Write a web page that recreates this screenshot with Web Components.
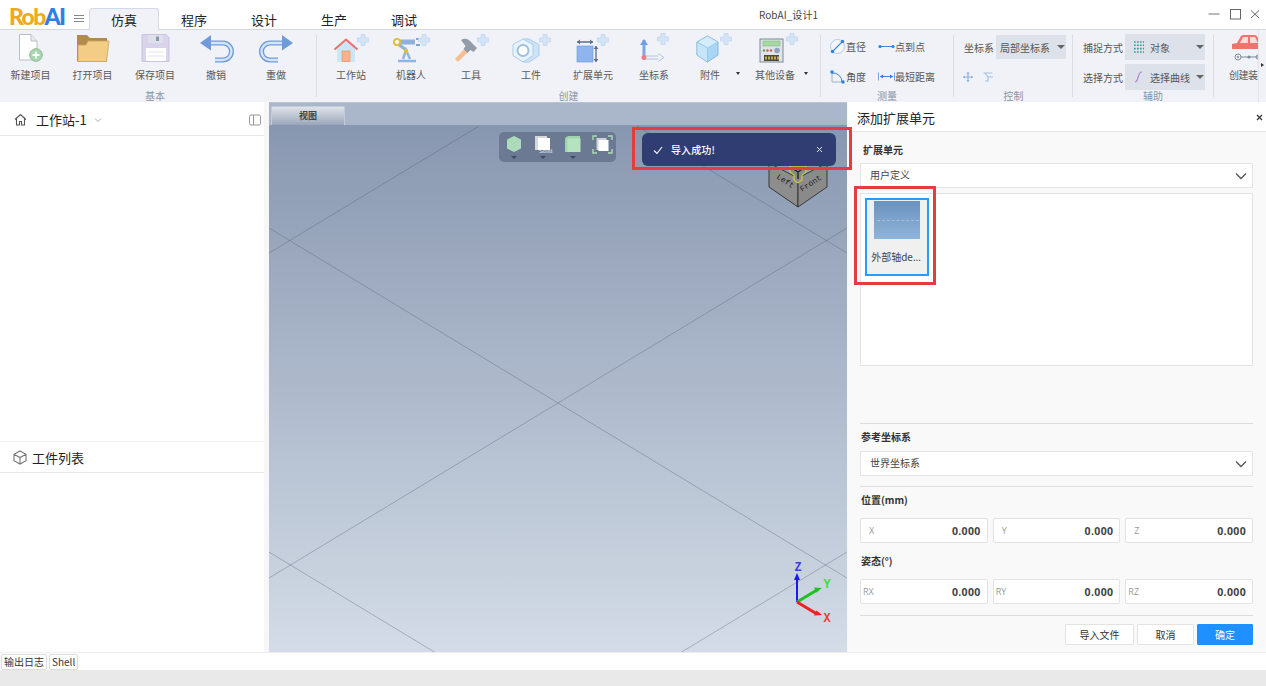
<!DOCTYPE html>
<html lang="zh"><head><meta charset="utf-8"><title>RobAI</title>
<style>
html,body{margin:0;height:686px;overflow:hidden;background:#fff;font-family:"Noto Sans CJK SC","Noto Sans",sans-serif;color:#333}
</style></head><body>
<rb-app></rb-app>
<script>
function def(name,css,html,attrs){
  customElements.define(name,class extends HTMLElement{
    connectedCallback(){
      if(this.shadowRoot)return;
      const s=this.attachShadow({mode:'open'});
      const a={};for(const n of this.getAttributeNames())a[n]=this.getAttribute(n);
      s.innerHTML='<style>'+css+'</style>'+(typeof html==='function'?html(a):html);
    }
  });
}
const plus=(x,y)=>`<path d="M${x-2} ${y-5.5}h4v3.5h3.5v4H${x+2}v3.5h-4V${y+2}H${x-5.5}v-4H${x-2}z" fill="#d3e4f6" stroke="#b8d2ee" stroke-width=".6"/>`;
const svg=(b,w=44,h=30)=>`<svg slot="icon" width="${w}" height="${h}" viewBox="0 0 ${w} ${h}" style="overflow:visible;display:block">${b}</svg>`;
const I={
 nw:svg(`<path d="M10.5 .5H22l6 6.500V26H10.500z" fill="#fff" stroke="#b9bec8"/><path d="M22 .5V7h6" fill="#e8eaef" stroke="#b9bec8"/><circle cx="27" cy="21" r="6.300" fill="#a7d8ae" stroke="#8fb79a"/><path d="M27 17.500v7M23.500 21h7" stroke="#fff" stroke-width="1.800"/>`),
 op:svg(`<path d="M6 27.500V1h10l3 3h17v23.500z" fill="#b08a4e"/><path d="M7 27.500h28.500L38 7H17l-2 4H7z" fill="#f3cd85" stroke="#c9a262" stroke-width=".8"/>`),
 sv:svg(`<path d="M9 .5h24l3 3v24H9z" fill="#d9d3ec" stroke="#c9c2e2"/><rect x="15" y="1" width="15" height="8" fill="#dde1ea"/><rect x="23" y="2.500" width="3" height="4.500" fill="#8d95a8"/><rect x="13" y="14" width="20" height="13" fill="#fff"/><path d="M15 18h16M15 22h16" stroke="#e3e3ec"/>`),
 ud:svg(`<path d="M15 9H29a8.500 8.500 0 0 1 0 17H21" fill="none" stroke="#6f9bdc" stroke-width="5"/><path d="M15 9H29a8.500 8.500 0 0 1 0 17H21" fill="none" stroke="#d6e4f8" stroke-width="2.400"/><path d="M6 9l11-8v15.500z" fill="#6f9bdc"/>`),
 rd:svg(`<g transform="translate(45 0) scale(-1 1)"><path d="M15 9H29a8.500 8.500 0 0 1 0 17H21" fill="none" stroke="#6f9bdc" stroke-width="5"/><path d="M15 9H29a8.500 8.500 0 0 1 0 17H21" fill="none" stroke="#d6e4f8" stroke-width="2.400"/><path d="M6 9l11-8v15.500z" fill="#6f9bdc"/></g>`),
 ws:svg(`<path d="M8 14L17 7l9 7v14H8z" fill="#c9e8f7"/><rect x="13" y="17" width="8" height="10.500" fill="#f7b28c" stroke="#ee8f66" stroke-width=".7"/><path d="M5.500 15.500L17 5.500l11.500 10" fill="none" stroke="#e8706a" stroke-width="2"/>${plus(34,6)}`),
 rb:svg(`<path d="M9 27h18" stroke="#8db6e3" stroke-width="2.500"/><path d="M14 25l3-9 4 9" fill="none" stroke="#8db6e3" stroke-width="2.500"/><path d="M8 9L17 16" stroke="#8fb2d8" stroke-width="3"/><path d="M9 8h17" stroke="#8fb2d8" stroke-width="5"/><circle cx="8" cy="8" r="3" fill="#fff" stroke="#e4bf3a" stroke-width="2"/><circle cx="17" cy="17" r="2.200" fill="#e4bf3a"/><path d="M27 5h4M27 11h4" stroke="#7ca6d4" stroke-width="2"/>${plus(35,6)}`),
 hm:svg(`<path d="M6 25L19 11l3.500 3.500L9 28z" fill="#f8bd90"/><path d="M12 6q5-3 9 1l7 7-3.500 4-3-2-3 3-4-4 2-3z" fill="#939ca8"/>${plus(34,6)}`),
 nt:svg(`<path d="M14 5h6l10 5.500v11L20 28h-6z" fill="#cfe3f6" stroke="#a9cdec"/><path d="M14 5l10 5.500v11L14 28 4 21.500v-11z" fill="#e9f3fb" stroke="#a9cdec"/><circle cx="14" cy="16.500" r="5.500" fill="#fff" stroke="#9fbfdf" stroke-width="2"/>${plus(36,6)}`),
 ex:svg(`<rect x="6" y="12" width="16" height="16" fill="#8fb4ee" stroke="#6d96d8" stroke-width=".6"/><path d="M6 8h16M25 12v16" stroke="#5a6f8c" stroke-width="1.300"/><path d="M6 8l3-2.500v5zM22 8l-3-2.500v5zM25 12l-2.500 3h5zM25 28l-2.500-3h5z" fill="#5a6f8c"/>${plus(32,6)}`),
 cs:svg(`<path d="M12 6v17" stroke="#7ba6e8" stroke-width="3"/><path d="M12 5l-4 6h8z" fill="#6f9ee6"/><circle cx="12" cy="23.500" r="2.500" fill="#f07a80"/><path d="M14 22h13M14 25h13" stroke="#a9bfd8" stroke-width=".9"/><path d="M26 19.500l6 4-6 4" fill="#eef2f8" stroke="#a9bfd8" stroke-width=".9"/>${plus(31,5)}`),
 cb:svg(`<path d="M19.500 2L30 8v13l-10.500 7L9 21V8z" fill="#a9d6f5" stroke="#86b8dc"/><path d="M9 8l10.500 6L30 8 19.500 2z" fill="#d5ecfb" stroke="#86b8dc" stroke-width=".6"/><path d="M19.500 14v14L9 21V8z" fill="#c6e5f9" stroke="#86b8dc" stroke-width=".6"/>${plus(38,5)}`),
 ot:svg(`<rect x="7" y="5" width="23" height="23" fill="#dfe4ea" stroke="#7d8894"/><rect x="10" y="7" width="17" height="5" fill="#a6d8a2" stroke="#7fae80" stroke-width=".5"/><circle cx="11" cy="16.500" r="1.200" fill="#5d9c5d"/><circle cx="14.500" cy="16.500" r="1.200" fill="#d8544e"/><circle cx="18" cy="16.500" r="1.200" fill="#d8544e"/><circle cx="24" cy="16.500" r="2.800" fill="#8ea4bd"/><rect x="11" y="21" width="15" height="6" fill="#4a4a3f"/><path d="M13 22.500v3M16 22.500v3M19 22.500v3M22 22.500v3M25 22.500v3" stroke="#e5c252" stroke-width="1.600"/>${plus(39,5)}`),
 car:svg(`<path d="M3 10l5-1 4-7q1-1 3-1h10q2 0 3 1l3 7v6H3z" fill="#f0746e"/><path d="M14 3h5v6h-8zM21 3h5l3 6h-8z" fill="#fbdcda"/><circle cx="9" cy="23" r="3" fill="none" stroke="#7d8a9a"/><circle cx="9" cy="23" r="1.100" fill="#7d8a9a"/><path d="M12 23h18" stroke="#7d8a9a"/><circle cx="20" cy="23" r="1.600" fill="#7d8a9a"/><circle cx="29" cy="23" r="2" fill="none" stroke="#7d8a9a"/>`,36,30)
};
const ms={
 d:`<svg width="17" height="17" viewBox="0 0 17 17"><circle cx="8.500" cy="8.500" r="7" fill="#f3f6fb" stroke="#b7c9e6"/><path d="M3.500 13.500l10-10" stroke="#3d87e6" stroke-width="1.100"/><circle cx="3.500" cy="13.500" r="1.700" fill="#2c7fe8"/><circle cx="13.500" cy="3.500" r="1.700" fill="#2c7fe8"/></svg>`,
 a:`<svg width="17" height="17" viewBox="0 0 17 17"><path d="M3 3v11h11" fill="none" stroke="#9db1cc"/><path d="M3 5a9 9 0 0 1 10 9" fill="none" stroke="#4a7ecb"/><circle cx="3" cy="4" r="1.700" fill="#2c7fe8"/><circle cx="14" cy="14" r="1.700" fill="#2c7fe8"/></svg>`,
 p:`<svg width="17" height="9" viewBox="0 0 17 9"><path d="M2 4.500h13" stroke="#3d87e6"/><circle cx="2" cy="4.500" r="1.600" fill="#2c7fe8"/><circle cx="15" cy="4.500" r="1.600" fill="#2c7fe8"/></svg>`,
 s:`<svg width="17" height="9" viewBox="0 0 17 9"><path d="M.5 .5v8M16.500 .5v8" stroke="#7fa2d4"/><path d="M2 4.500h13" stroke="#3d87e6"/><path d="M2 4.500l3-2v4zM15 4.500l-3-2v4z" fill="#2c7fe8"/></svg>`
};

def('rb-item',`:host{display:flex;flex-direction:column;align-items:center;position:relative;flex:none;padding-top:4px;box-sizing:border-box}
.i{height:30px;display:flex;justify-content:center}
.l{margin-top:4px;font-size:10px;line-height:14px;color:#5a5a5a;white-space:nowrap}
.c{position:absolute;top:42px;width:0;height:0;border:2.500px solid transparent;border-top:3px solid #333;border-bottom:0}`,
a=>`<div class="i"><slot name="icon"></slot></div><div class="l">${a.label}</div>${a.caret?`<span class="c" style="right:${a.caret}px"></span>`:''}`);

def('rb-group',`:host{display:flex;flex-direction:column;flex:none;height:72px;box-sizing:border-box;padding-right:1px;background:linear-gradient(#d9dde6,#d9dde6) right 5px/1px 62px no-repeat}
:host([last]){background:none;padding:0;overflow:hidden}
.c{flex:1;display:flex;min-height:0}
.t{height:12px;line-height:12px;font-size:10px;color:#8b95a8;text-align:center;white-space:nowrap}`,
a=>`<div class="c"><slot></slot></div><div class="t" style="${a.pl?'padding-left:'+a.pl+'px;':''}${a.pr?'padding-right:'+a.pr+'px':''}">${a.label||''}</div>`);

def('rb-drop',`:host{display:flex;align-items:center;box-sizing:border-box;background:#dde2ea;font-size:10px;color:#555;position:relative;white-space:nowrap}
.a{position:absolute;right:1px;top:50%;margin-top:-2px;border:4px solid transparent;border-top:4px solid #666;border-bottom:0}`,
`<slot></slot><span class="a"></span>`);

def('rb-ribbon',`:host{display:flex;height:72px;background:#f0f2f7;flex:none;overflow:hidden;position:relative;font-size:10px;color:#555}
.rw{display:flex;align-items:center;white-space:nowrap}
.scroll{width:8px;flex:none;box-sizing:border-box;border-left:1px solid #e1e5ee;display:flex;align-items:center;justify-content:center;height:72px}
.scroll i{border:2.500px solid transparent;border-left:3px solid #333;border-right:0;transform:translateY(-1px)}
.m{display:grid;grid-template-columns:49px 1fr;padding:1px 0 0 8px;align-content:start;width:100%;box-sizing:border-box}
.m .rw{height:30px}
.m svg{display:block;flex:none}`,
`<rb-group label="基本" style="width:317px" pr="6">
 <rb-item label="新建项目" style="width:61px">${I.nw}</rb-item>
 <rb-item label="打开项目" style="width:63px">${I.op}</rb-item>
 <rb-item label="保存项目" style="width:62px">${I.sv}</rb-item>
 <rb-item label="撤销" style="width:60px">${I.ud}</rb-item>
 <rb-item label="重做" style="width:60px">${I.rd}</rb-item>
</rb-group>
<rb-group label="创建" style="width:504px">
 <rb-item label="工作站" style="width:60px;margin-left:4px">${I.ws}</rb-item>
 <rb-item label="机器人" style="width:60px">${I.rb}</rb-item>
 <rb-item label="工具" style="width:60px">${I.hm}</rb-item>
 <rb-item label="工件" style="width:60px">${I.nt}</rb-item>
 <rb-item label="扩展单元" style="width:64px">${I.ex}</rb-item>
 <rb-item label="坐标系" style="width:58px">${I.cs}</rb-item>
 <rb-item label="附件" caret="-3" style="width:54px">${I.cb}</rb-item>
 <rb-item label="其他设备" caret="-3" style="width:60px;margin-left:8px">${I.ot}</rb-item>
</rb-group>
<rb-group label="测量" style="width:133px">
 <div class="m">
  <div class="rw">${ms.d}<span>直径</span></div><div class="rw">${ms.p}<span>点到点</span></div>
  <div class="rw">${ms.a}<span>角度</span></div><div class="rw">${ms.s}<span>最短距离</span></div>
 </div>
</rb-group>
<rb-group label="控制" style="width:119px" pl="1">
 <div style="padding:5px 0 0 10px">
  <div class="rw" style="height:24px"><span style="width:32px">坐标系</span><rb-drop style="width:70px;height:24px;padding-left:4px">局部坐标系</rb-drop></div>
  <div class="rw" style="height:18px;margin-top:9px;margin-left:-1px;gap:10px">
   <svg width="10" height="10" viewBox="0 0 10 10"><path d="M5 0v10M0 5h10" stroke="#8fb2e0" stroke-width="1.200"/><path d="M5 0L3.500 2h3zM5 10L3.500 8h3zM0 5l2-1.500v3zM10 5L8 3.500v3z" fill="#8fb2e0"/></svg>
   <svg width="11" height="10" viewBox="0 0 11 10"><path d="M.5 1h9M2 1l3 4v4h-3M5 5h5" fill="none" stroke="#a3c1e4" stroke-width="1.200"/></svg>
  </div>
 </div>
</rb-group>
<rb-group label="辅助" style="width:141px" pl="20">
 <div style="padding:4px 0 0 10px">
  <div class="rw" style="height:26px"><span style="width:42px">捕捉方式</span><rb-drop style="width:80px;height:26px;padding-left:8px">
   <svg width="12" height="12" viewBox="0 0 12 12" style="margin-right:5px"><path d="M1 1h10M1 4.300h10M1 7.600h10M1 11h10" stroke="#2c9a90" stroke-dasharray="1.600 1.400" stroke-width="1.600"/></svg><span>对象</span></rb-drop></div>
  <div class="rw" style="height:26px;margin-top:4px"><span style="width:42px">选择方式</span><rb-drop style="width:80px;height:26px;padding-left:8px">
   <svg width="12" height="12" viewBox="0 0 12 12" style="margin-right:5px"><path d="M2 11c4 0 2-10 7-10" fill="none" stroke="#b27fd6" stroke-width="1.200"/></svg><span>选择曲线</span></rb-drop></div>
 </div>
</rb-group>
<rb-group last style="width:44px"><rb-item label="创建装" style="width:44px;padding-left:15px;align-items:flex-start;letter-spacing:-.5px">${I.car}</rb-item></rb-group>
<div class="scroll"><i></i></div>`);

def('rb-titlebar',`:host{display:flex;height:30px;flex:none;box-sizing:border-box;border-bottom:1px solid #d3d8e6;background:#fff}
.logo{font-family:Lato,"Noto Sans",sans-serif;font-weight:900;font-size:23px;line-height:26px;margin:3px 0 0 9px;width:54px;letter-spacing:-1.600px;color:#efa91d;white-space:nowrap}
.logo b{color:#2f80e4;font-weight:900}
.bars{margin:15px 0 0 11px;width:10px;height:7px;border-top:1px solid #888;border-bottom:1px solid #888;position:relative;box-sizing:border-box}
.bars:after{content:"";position:absolute;left:0;right:0;top:2px;height:1px;background:#888}
.tabs{display:flex;margin-left:5px;height:30px;align-items:flex-end}
.tab{width:70px;box-sizing:border-box;height:23px;line-height:24px;text-align:center;font-size:13px;color:#222;border:1px solid transparent;border-bottom:0}
.tab.on{background:#f0f2f7;border-color:#d3d8e6;border-radius:3px 3px 0 0;transform:translateY(1px);line-height:22px}
.title{margin:7px 0 0 319px;font-size:10px;line-height:16px;color:#444;white-space:nowrap;width:61px;text-align:center;letter-spacing:.05px}
.win{margin-left:auto;display:flex;padding:8px 5px 0 0;align-items:flex-start}
.win svg{display:block}`,
`<div class="logo">Rob<b>AI</b></div><div class="bars"></div>
<div class="tabs"><div class="tab on">仿真</div><div class="tab">程序</div><div class="tab">设计</div><div class="tab">生产</div><div class="tab">调试</div></div>
<div class="title">RobAI_设计1</div>
<div class="win">
<svg width="12" height="12" viewBox="0 0 12 12"><path d="M.5 6h11" stroke="#777"/></svg>
<svg style="margin-left:10px" width="12" height="12" viewBox="0 0 12 12"><rect x=".5" y="1.500" width="10" height="9.500" fill="none" stroke="#666"/></svg>
<svg style="margin-left:7px" width="12" height="12" viewBox="0 0 12 12"><path d="M2 2.500l8 7.500M10 2.500l-8 7.500" stroke="#666"/></svg>
</div>`);

def('rb-side',`:host{display:flex;flex-direction:column;width:264px;flex:none;background:#fff}
.h{display:flex;align-items:center;box-sizing:border-box;border-bottom:1px solid #e6e7ea;color:#222}
.a{height:34px;padding:2px 3px 0 14px;font-size:13px}
.b{padding:1px 0 0 13px;border-top:1px solid #eef0f2;font-size:13px;box-sizing:content-box;height:29px}
.body{height:305px;flex:none}
.caret{margin-left:7px}
.sp{margin-left:auto}`,
`<div class="h a"><svg width="13" height="13" viewBox="0 0 13 13"><path d="M1 6.500L6.500 1.500 12 6.500M2.500 5.500V12h3V8.500h2V12h3V5.500" fill="none" stroke="#555" stroke-width="1.100"/></svg>
<span style="margin-left:9px">工作站-1</span>
<svg class="caret" width="8" height="6" viewBox="0 0 8 6"><path d="M1 1.500l3 3 3-3" fill="none" stroke="#aaa"/></svg>
<svg class="sp" width="12" height="12" viewBox="0 0 12 12"><rect x=".5" y="1" width="11" height="10" rx="1.500" fill="none" stroke="#999"/><path d="M4.500 1v10" stroke="#999"/></svg></div>
<div class="body"></div>
<div class="h b"><svg width="14" height="15" viewBox="0 0 14 15"><path d="M7 1l6 3.300v6.400L7 14l-6-3.300V4.300zM1 4.300l6 3.300 6-3.300M7 7.600V14" fill="none" stroke="#777" stroke-width="1.100"/></svg><span style="margin-left:5px">工件列表</span></div>`);

def('rb-viewport',`:host{display:flex;flex-direction:column;width:578px;flex:none;margin-left:5px;background:#a9b6ca}
.tabs{height:23px;flex:none;display:flex;align-items:flex-end;padding-left:2px;background:#aab6ca;border-top:1px solid #b9c3d3;box-sizing:border-box}
.tab{width:74px;height:19px;box-sizing:border-box;text-align:center;font-size:9px;font-weight:700;line-height:18px;color:#444;background:linear-gradient(#dfe3ea,#9aa6ba);border:1px solid #c5ccd8;border-bottom:0;border-radius:2px 2px 0 0}
.cv{flex:1;position:relative;overflow:hidden;background:linear-gradient(#8897b0,#d3dce7)}
.grid{position:absolute;left:0;top:0;width:578px;height:527px}
.grid line{stroke:#4f5a6d;stroke-opacity:.5;stroke-width:.7}
.cube{position:absolute;left:490px;top:30px;overflow:visible}
.tools{position:absolute;left:230px;top:7px;width:117px;height:30px;background:#6b7a92;border-radius:5px;display:flex;box-sizing:border-box;padding:3px 0 0 0}
.tools div{position:relative;width:29.500px;flex:none;display:flex;justify-content:center}
.tools div.car:after{content:"";position:absolute;top:21px;left:11.750px;border:3px solid transparent;border-top:3px solid #3e4a5e;border-bottom:0}
.tools svg{overflow:visible}
.axes{position:absolute;left:505px;top:430px;overflow:visible}`,
`<div class="tabs"><div class="tab">视图</div></div>
<div class="cv">
<svg class="grid" viewBox="0 0 578 527"><line x1="210" y1="1" x2="0" y2="128"/><line x1="0" y1="103" x2="578" y2="453"/><line x1="0" y1="453" x2="578" y2="103"/><line x1="368" y1="1" x2="578" y2="128"/><line x1="0" y1="427" x2="210" y2="554"/><line x1="368" y1="554" x2="578" y2="427"/></svg>
<svg class="cube" width="70" height="60" viewBox="0 0 70 60">
 <path d="M10 8l29 15v29L10 32z" fill="#8d8d8d" stroke="#222" stroke-width=".8"/>
 <path d="M68 8L39 23v29l29-20z" fill="#8a8a8a" stroke="#222" stroke-width=".8"/>
 <path d="M31 11h16v6l-4 3v5l-4 3-4-3v-5l-4-3z" fill="#8a8a8a" stroke="#e8d820" stroke-width="1"/>
 <path d="M39 17v7M33 13l6 4 6-4" stroke="#222" stroke-width="1.400" fill="none"/>
 <text transform="translate(17 23) rotate(33)" font-family="Liberation Mono" font-size="8" fill="#222">Left</text>
 <text transform="translate(43 37) rotate(-33)" font-family="Liberation Mono" font-size="8" fill="#222">Front</text>
</svg>
<div class="tools">
 <div class="car"><svg width="16" height="18" viewBox="0 0 16 18"><path d="M8 1l7 3.500v9L8 17l-7-3.500v-9z" fill="#acdcb9"/><path d="M1 4.500L8 8l7-3.500M8 8v9" stroke="#8fc49f" stroke-width=".5" stroke-dasharray="1 1" fill="none"/></svg></div>
 <div class="car"><svg width="18" height="18" viewBox="0 0 18 18"><rect x="1" y="1" width="12" height="14" fill="#d6d8dc"/><rect x="4" y="3" width="12" height="12" fill="#fff"/><text x="5" y="18" font-family="Liberation Sans" font-size="6" fill="#dfe3ea">Solid</text></svg></div>
 <div class="car"><svg width="17" height="18" viewBox="0 0 17 18"><path d="M1 3l3-2h12v14l-3 2H1z" fill="#9fd4ab"/><rect x="3.500" y="3.500" width="13" height="13.500" fill="#b5e3c0"/></svg></div>
 <div><svg width="21" height="19" viewBox="0 0 21 19"><path d="M1 5V1h4M16 1h4v4M20 14v4h-4M5 18H1v-4" fill="none" stroke="#a9dcb6" stroke-width="1.400"/><rect x="4.500" y="3" width="10" height="12" fill="#cfd2d6"/><rect x="6.500" y="5" width="10" height="11" fill="#fff"/></svg></div>
</div>
<svg class="axes" width="70" height="70" viewBox="0 0 70 70">
 <path d="M23 47V22" stroke="#1a1aee" stroke-width="2"/><path d="M23 18l-3 7h6z" fill="#1a1aee"/>
 <path d="M23 47l20-12" stroke="#21c021" stroke-width="3"/><path d="M48 33l-8-.5 2.500 5z" fill="#21c021"/>
 <path d="M23 47l20 12" stroke="#ee2020" stroke-width="3"/><path d="M48 60l-8 .5 2.500-5z" fill="#ee2020"/>
 <text x="24" y="16" text-anchor="middle" font-family="Liberation Mono" font-weight="700" font-size="12" fill="#3a3aee">Z</text>
 <text x="53" y="33" text-anchor="middle" font-family="Liberation Mono" font-weight="700" font-size="12" fill="#35e035">Y</text>
 <text x="53" y="67" text-anchor="middle" font-family="Liberation Mono" font-weight="700" font-size="12" fill="#ee3a3a">X</text>
</svg>
</div>`);

def('rb-toast',`:host{position:absolute;left:642px;top:133px;width:194px;height:33px;background:#2f3d72;border-radius:6px;color:#fff;display:flex;align-items:center;box-sizing:border-box;padding:0 13px 0 10px;font-size:10px;font-weight:500;z-index:5}
span{margin-left:7px;letter-spacing:.1px}
svg{display:block}
.x{margin-left:auto}`,
`<svg width="12" height="12" viewBox="0 0 12 12"><path d="M2 6.500l3 3 5-6.500" fill="none" stroke="#fff" stroke-width="1.100"/></svg><span>导入成功!</span>
<svg class="x" width="7" height="7" viewBox="0 0 7 7"><path d="M1 1l5 5M6 1L1 6" stroke="#dfe3ee"/></svg>`);

def('rb-mark',`:host{position:absolute;box-sizing:border-box;border:3px solid #e53d3d;z-index:6;pointer-events:none}`,``);

def('rb-select',`:host{display:flex;align-items:center;height:25px;box-sizing:border-box;background:#fff;border:1px solid #e5e5e5;padding:0 5px 2px 9px;font-size:10px;color:#444}
svg{margin-left:auto;margin-top:2px}`,
`<slot></slot><svg width="12" height="8" viewBox="0 0 12 8"><path d="M1 1.500l5 5 5-5" fill="none" stroke="#555" stroke-width="1.300"/></svg>`);

def('rb-num',`:host{display:flex;align-items:center;height:25px;box-sizing:border-box;background:#fff;border:1px solid #e3e3e3;border-radius:2px;padding:0 6px 0 2px;font-family:"Open Sans","Noto Sans",sans-serif;flex:1 1 0;min-width:0}
.l{font-size:9px;color:#9a9a9a;padding-left:6px}
:host([wide]) .l{padding-left:0}
.v{margin-left:auto;font-size:10.500px;font-weight:700;color:#444;letter-spacing:.35px}`,
a=>`<span class="l">${a.label}</span><span class="v">${a.value}</span>`);

def('rb-btn',`:host{display:flex;align-items:center;justify-content:center;height:21px;box-sizing:border-box;background:#fff;border:1px solid #e3e3e3;font-size:10px;color:#333;border-radius:1px}
:host([primary]){background:#1e90ff;border-color:#1e90ff;color:#fff}`,`<slot></slot>`);

def('rb-props',`:host{display:flex;flex-direction:column;flex:1;min-width:0;margin-left:1px;background:#f9f9f9;font-size:10px;color:#333;position:relative}
.hd{height:30px;box-sizing:border-box;padding:2px 3px 0 9px;background:#fff;display:flex;align-items:center;border-bottom:1px solid #e6e6e6;font-size:13px;color:#222;flex:none}
.hd svg{margin-left:auto}
.bd{padding:11px 13px 0 12px;display:flex;flex-direction:column;flex:1}
.lb{height:14px;line-height:14px;font-weight:700;font-size:10px;color:#333;padding-left:1px}
.ln{height:1px;background:#ddd;flex:none}
.list{height:173px;margin-top:5px;box-sizing:border-box;background:#fff;border:1px solid #e3e3e3;padding:4px;flex:none}
.card{width:64px;height:78px;box-sizing:border-box;border:2px solid #2d9af5;background:#f0f0f0;padding:1px 6px 0 6px;display:flex;flex-direction:column;align-items:center}
.thumb{width:46px;height:38px;background:linear-gradient(#6a93bf,#8fb4da);flex:none;position:relative}
.thumb:after{content:"";position:absolute;left:3px;right:1px;top:19px;border-top:1px dashed #a9bdd4}
.cap{margin-top:11px;font-size:10px;line-height:14px;white-space:nowrap;color:#444;margin-left:-2px}
.cap i{font-style:normal;font-family:"Noto Sans",sans-serif}
.row{display:flex;gap:5px;flex:none}
.btns{display:flex;justify-content:flex-end;gap:3px;margin-top:8px}`,
`<div class="hd">添加扩展单元<svg width="7" height="7" viewBox="0 0 7 7"><path d="M1 1l5 5M6 1L1 6" stroke="#333" stroke-width="1.200"/></svg></div>
<div class="bd">
<div class="lb" style="padding-left:3px">扩展单元</div>
<rb-select style="margin-top:6px">用户定义</rb-select>
<div class="list"><div class="card"><div class="thumb"></div><div class="cap">外部轴de<i>…</i></div></div></div>
<div class="ln" style="margin-top:57px"></div>
<div class="lb" style="margin-top:6px">参考坐标系</div>
<rb-select style="margin-top:7px">世界坐标系</rb-select>
<div class="ln" style="margin-top:10px"></div>
<div class="lb" style="margin-top:6px">位置(mm)</div>
<div class="row" style="margin-top:11px"><rb-num label="X" value="0.000"></rb-num><rb-num label="Y" value="0.000"></rb-num><rb-num label="Z" value="0.000"></rb-num></div>
<div class="lb" style="margin-top:11px">姿态(°)</div>
<div class="row" style="margin-top:11px"><rb-num wide label="RX" value="0.000"></rb-num><rb-num wide label="RY" value="0.000"></rb-num><rb-num wide label="RZ" value="0.000"></rb-num></div>
<div class="ln" style="margin-top:11px"></div>
<div class="btns"><rb-btn style="width:69px">导入文件</rb-btn><rb-btn style="width:57px">取消</rb-btn><rb-btn primary style="width:56px">确定</rb-btn></div>
</div>`);

def('rb-bottom',`:host{display:block;flex:none}
.t{height:18px;box-sizing:border-box;border-top:1px solid #eee;background:#fff;display:flex;gap:2px;padding:1px 0 0 1px}
.t span{height:16px;box-sizing:border-box;border:1px solid #dcdcdc;border-radius:2px;font-size:10px;line-height:14px;padding:0 2px;color:#333;display:block}
.s{height:16px;background:#e9e9e9}`,
`<div class="t"><span>输出日志</span><span>Shell</span></div><div class="s"></div>`);

def('rb-app',`:host{display:flex;flex-direction:column;height:686px;width:1266px;position:relative;overflow:hidden}
.main{display:flex;flex:1;min-height:0;background:#f7f7f8}`,
`<rb-titlebar></rb-titlebar><rb-ribbon></rb-ribbon>
<div class="main"><rb-side></rb-side><rb-viewport></rb-viewport><rb-props></rb-props></div>
<rb-bottom></rb-bottom>
<rb-toast></rb-toast>
<rb-mark style="left:632px;top:127px;width:220px;height:43px"></rb-mark>
<rb-mark style="left:854px;top:186px;width:82px;height:99px"></rb-mark>`);
</script>
</body></html>
